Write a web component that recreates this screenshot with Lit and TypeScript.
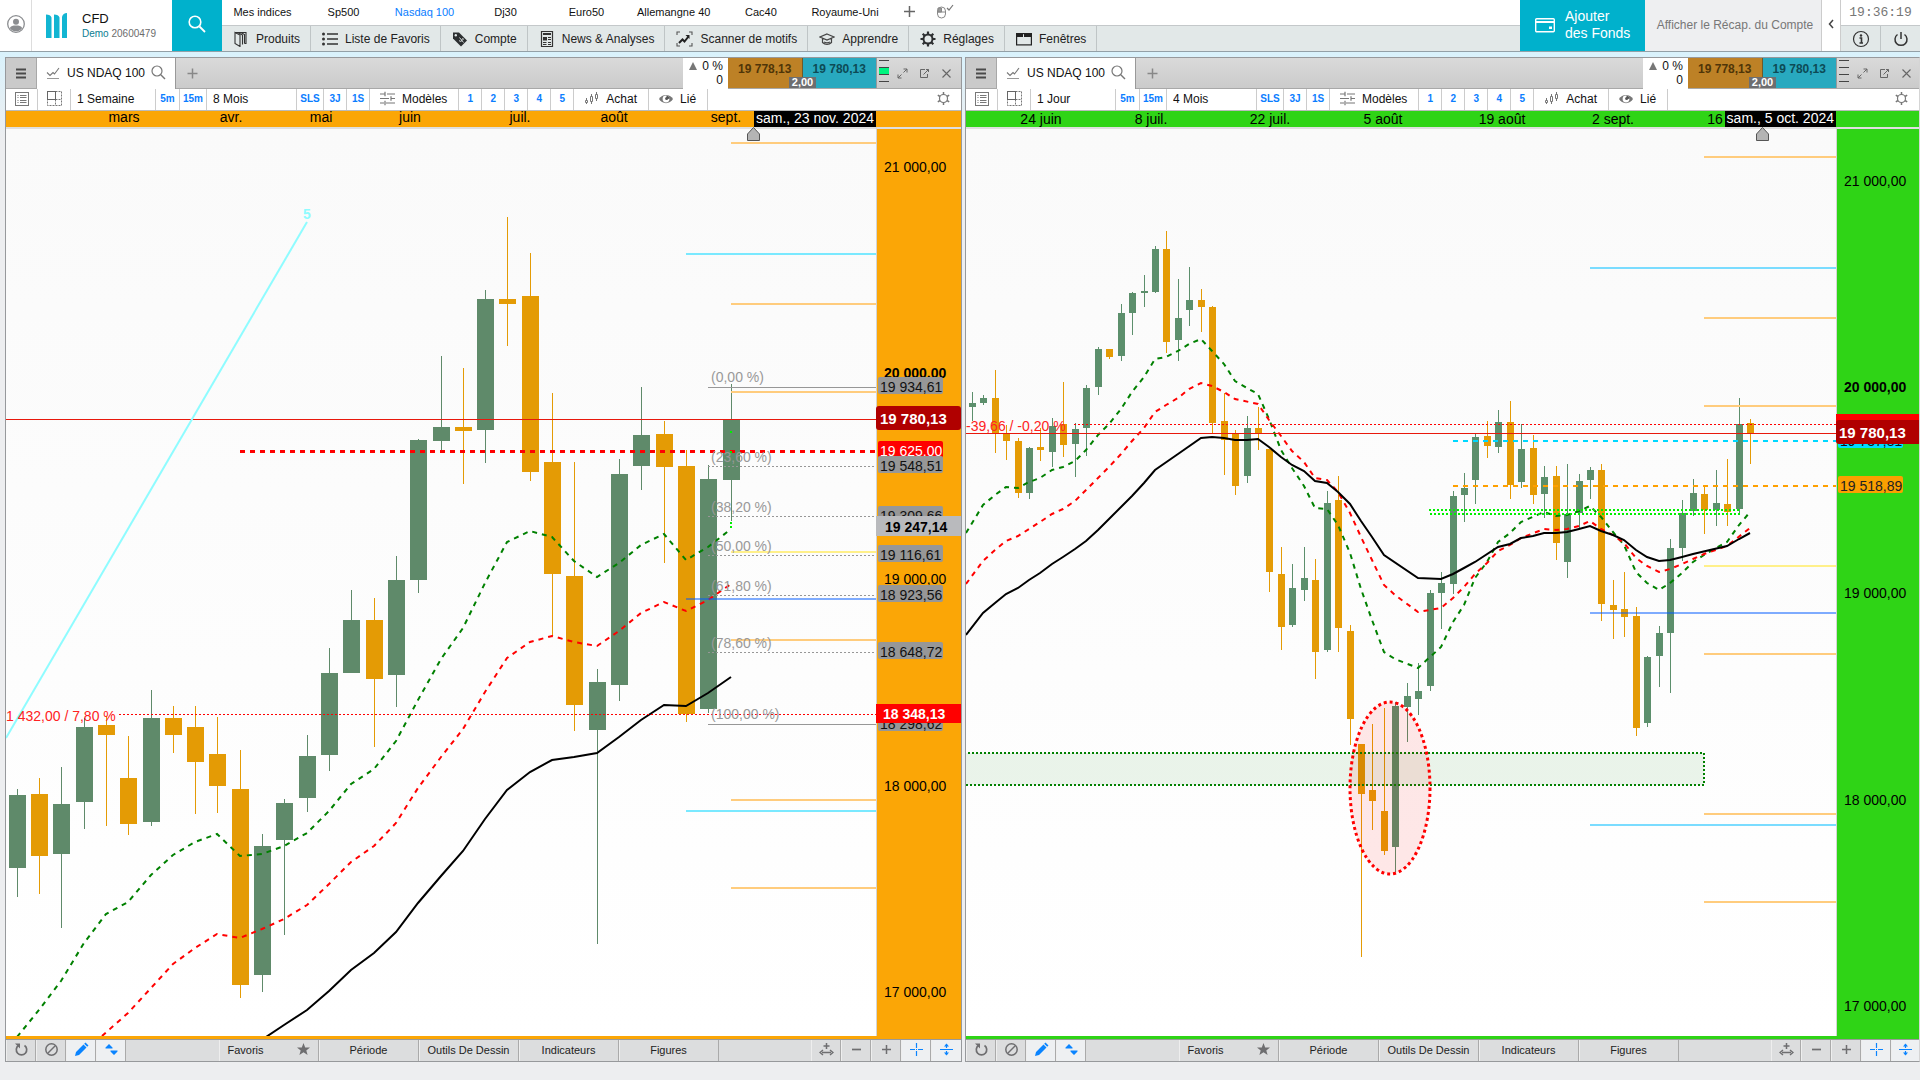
import { LitElement, html, svg, css, TemplateResult } from "lit";
import { customElement, property } from "lit/decorators.js";

/* ---------- icons ---------- */

const icon = (w: number, h: number, body: TemplateResult) =>
  html`<svg class="icon" width=${w} height=${h} viewBox="0 0 ${w} ${h}" aria-hidden="true">${body}</svg>`;

const I = {
  user: icon(18, 18, svg`<circle cx="9" cy="9" r="8.300" fill="#fff" stroke="#8b8d90" stroke-width="1.300"/><circle cx="9" cy="6.800" r="3" fill="#8b8d90"/><path d="M2.800 13c1-2 3-2.500 6.200-2.500s5.200 .5 6.200 2.500a7.400 7.400 0 0 1-12.400 0z" fill="#8b8d90"/>`),
  logo: icon(22, 26, svg`<path d="M0 1.500c3 0 5 1 5.500 3V25H0z M8 1.500c3 0 5 1 5.500 3V25H8z M16 4c.5-2.500 2.500-4 5-4v25h-5z" fill="#12b5d2"/>`),
  searchBig: icon(18, 18, svg`<circle cx="7" cy="7" r="5.800" fill="none" stroke="#fff" stroke-width="1.600"/><path d="M11.500 11.500 17 17" stroke="#fff" stroke-width="1.800"/>`),
  plus: icon(13, 13, svg`<path d="M6.500 1v11M1 6.500h11" stroke="#666" stroke-width="1.500"/>`),
  mouse: icon(18, 16, svg`<rect x="1.500" y="3" width="8" height="11" rx="4" fill="none" stroke="#888"/><path d="M2 4h3.500v4H2zM2 8h7" fill="#999" stroke="#888"/><path d="M11 4l2 2 4-5" fill="none" stroke="#777" stroke-width="1.200"/>`),
  products: icon(16, 16, svg`<path d="M2 1.500h11v11h-1.500M2 1.500l5 2.500v11.500l-5-3zM5 1.500l4.500 2.500v9.500M8 1.500l3.500 2v9" fill="none" stroke="#333" stroke-width="1.100"/>`),
  list: icon(16, 16, svg`<path d="M5 3h11M5 8h11M5 13h11" stroke="#333" stroke-width="1.600"/><circle cx="1.500" cy="3" r="1.500" fill="#333"/><circle cx="1.500" cy="8" r="1.500" fill="#333"/><circle cx="1.500" cy="13" r="1.500" fill="#333"/>`),
  tag: icon(16, 16, svg`<path d="M1 1.500h6l8 8-6 6-8-8z" fill="#2c2f31"/><circle cx="3.800" cy="4.200" r="1.200" fill="#e2e8e8"/><path d="M7 9.500c1.500 1.500 3 1 3-.5s.5-2 2-.5M7.500 6.500l4 5" stroke="#e2e8e8" fill="none" stroke-width=".9"/>`),
  news: icon(16, 16, svg`<path d="M2.500 .5h11v15h-11z" fill="none" stroke="#333" stroke-width="1.200"/><path d="M4 2h8v2H4zM4 6h4v3.500H4z" fill="#333"/><path d="M9 6.500h3M9 8.500h3M4 11.500h3.500M9 11.500h3M4 13.500h3.500M9 13.500h3" stroke="#333"/>`),
  scanner: icon(17, 16, svg`<path d="M1 4V1h3M13 1h3v3M16 12v3h-3M4 15H1v-3" fill="none" stroke="#555" stroke-width="1.100"/><path d="M3 12l3.500-3.500 2 2 4-5" fill="none" stroke="#222" stroke-width="2"/><path d="M9.500 4H13.500V8z" fill="#222"/>`),
  learn: icon(16, 16, svg`<path d="M8 3l7 3-7 3-7-3zM3.500 7.500v4c2.500 2.500 6.500 2.500 9 0v-4M5 11c2 1 4 1 6 0" fill="none" stroke="#444" stroke-width="1.200"/>`),
  gear: icon(16, 16, svg`<circle cx="8" cy="8" r="4.500" fill="none" stroke="#2c2f31" stroke-width="2"/><path d="M8 .5v3M8 12.500v3M.5 8h3M12.500 8h3M2.700 2.700l2 2M11.300 11.300l2 2M2.700 13.300l2-2M11.300 4.700l2-2" stroke="#2c2f31" stroke-width="2.200"/>`),
  window: icon(16, 16, svg`<rect x=".6" y="2.600" width="14.800" height="11.300" fill="none" stroke="#222" stroke-width="1.200"/><path d="M1 3h6v3H1zM8 3h7v3H8z" fill="#222"/>`),
  wallet: icon(20, 16, svg`<rect x=".7" y="1.700" width="18.600" height="13" rx="1" fill="none" stroke="#fff" stroke-width="1.400"/><path d="M1 5h18" stroke="#fff" stroke-width="2"/><rect x="14" y="9.500" width="3" height="2.500" fill="#fff"/>`),
  chevron: icon(6, 10, svg`<path d="M5 1 1.500 5 5 9" fill="none" stroke="#444" stroke-width="1.500"/>`),
  info: icon(18, 18, svg`<circle cx="9" cy="9" r="7.500" fill="none" stroke="#333" stroke-width="1.200"/><circle cx="9" cy="5.500" r="1.200" fill="#333"/><path d="M7.500 8H9.500V12.500M7.500 13h3.500" fill="none" stroke="#333" stroke-width="1.600"/>`),
  power: icon(16, 16, svg`<path d="M4.500 3.500a6 6 0 1 0 7 0M8 1v7" fill="none" stroke="#333" stroke-width="1.500"/>`),
  menu: icon(10, 11, svg`<path d="M0 1.500h10M0 5.500h10M0 9.500h10" stroke="#4a4a4a" stroke-width="2"/>`),
  spark: icon(14, 14, svg`<path d="M1 12.500h12" stroke="#999"/><path d="M1 6.500l3 3 3-3 1.500 1.500L13 2" fill="none" stroke="#777" stroke-width="1.100"/>`),
  search: icon(15, 15, svg`<circle cx="6" cy="6" r="5" fill="none" stroke="#777" stroke-width="1.200"/><path d="M9.800 9.800 14 14" stroke="#777" stroke-width="1.400"/>`),
  add: icon(11, 11, svg`<path d="M5.500 .5v10M.5 5.500h10" stroke="#888" stroke-width="1.500"/>`),
  expand: icon(11, 11, svg`<path d="M6.500 4.500l3.500-3.500M6.500 1H10v3.500M4.500 6.500L1 10M1 6.500V10h3.500" fill="none" stroke="#666"/>`),
  popout: icon(11, 11, svg`<path d="M6 1.500H1.500v8h7V6M4.500 6.500l5-5M7 1.500h2.500V4" fill="none" stroke="#666"/>`),
  close: icon(11, 11, svg`<path d="M1.500 1.500l8 8M9.500 1.500l-8 8" stroke="#666" stroke-width="1.100"/>`),
  details: icon(14, 14, svg`<rect x=".5" y=".5" width="13" height="13" fill="none" stroke="#777"/><path d="M2.500 3.500h1M5 3.500h6.500M2.500 5.500h1M5 5.500h6.500M2.500 8.500h1M5 8.500h6.500M2.500 10.500h1M5 10.500h6.500" stroke="#777"/>`),
  layout: icon(15, 15, svg`<path d="M8.500 .5h6v14h-14v-6M8.500 8.500h6M8.500 8.500v6" fill="none" stroke="#777" stroke-dasharray="2 1"/><rect x=".5" y=".5" width="8" height="8" fill="none" stroke="#666"/>`),
  sliders: icon(15, 15, svg`<path d="M0 3h5M7 3h8M0 7.500h9M11 7.500h4M0 12h4M6 12h9" stroke="#777" stroke-width="1.200"/><path d="M5 .8v4.400M11 5.300v4.400M5 9.800v4.400" stroke="#777" stroke-width="1.200"/>`),
  candles: icon(15, 15, svg`<path d="M2.500 7v6M7.500 3v10M12.500 1v9" stroke="#777"/><path d="M1.500 9.500h2v2h-2zM6.500 5.500h2v5h-2zM11.500 3.500h2v4h-2z" fill="#fff" stroke="#777"/>`),
  eye: icon(14, 14, svg`<path d="M0 7C3 1.500 11 1.500 14 7 11 12.500 3 12.500 0 7z" fill="#777"/><circle cx="7" cy="7" r="3.400" fill="#fff"/><path d="M7.500 6.500V3.600A3.400 3.400 0 0 1 10.400 7z" fill="#555"/><circle cx="7.600" cy="6.400" r="1.500" fill="#555"/>`),
  cog: icon(15, 15, svg`<circle cx="7.500" cy="7.500" r="4" fill="none" stroke="#777" stroke-width="1.200"/><path d="M7.500 1v2.500M7.500 11.500V14M1.800 4.200l2.200 1.300M11 9.500l2.200 1.300M1.800 10.800 4 9.500M11 5.500l2.200-1.300" stroke="#777" stroke-width="1.500"/>`),
  refresh: icon(15, 15, svg`<path d="M4.500 3.500a5.200 5.200 0 1 0 6 0" fill="none" stroke="#6e6e70" stroke-width="1.700"/><path d="M1 1.500h5v5z" fill="#6e6e70"/>`),
  ban: icon(15, 15, svg`<circle cx="7.500" cy="7.500" r="5.700" fill="none" stroke="#6e6e70" stroke-width="1.500"/><path d="M4 11l7-7" stroke="#6e6e70" stroke-width="1.500"/>`),
  pencil: icon(15, 15, svg`<path d="M1 14l1-4 7.500-7.500 3 3L5 13zM10.200 1.800l1.300-1.300 3 3-1.300 1.300z" fill="#0a84ff"/>`),
  updown: icon(13, 13, svg`<path d="M4 1l3.500 3.500v1H.5v-1zM5.500 7.500h7v1L9 12 5.500 8.500z" fill="#0a84ff"/>`),
  star: icon(13, 13, svg`<path d="M6.500 0l1.700 4.500H13L9.300 7.400 10.600 12 6.500 9.300 2.400 12 3.700 7.400 0 4.500h4.800z" fill="#6e6e70"/>`),
  fit: icon(15, 15, svg`<path d="M7.500 1v6M4.500 4h6" stroke="#6e6e70" stroke-width="1.500"/><path d="M3 10.500h9M4 8l-3 2.500L4 13M11 8l3 2.500L11 13" fill="none" stroke="#6e6e70" stroke-width="1.400"/>`),
  minus: icon(11, 11, svg`<path d="M1 5.500h9" stroke="#6e6e70" stroke-width="1.700"/>`),
  plusGrey: icon(11, 11, svg`<path d="M1 5.500h9M5.500 1v9" stroke="#6e6e70" stroke-width="1.500"/>`),
  cross: icon(13, 13, svg`<path d="M0 6.500h5M8 6.500h5M6.500 0v5M6.500 8v5M6 6.500h1" stroke="#0a84ff" stroke-width="1.200"/>`),
  split: icon(13, 13, svg`<path d="M0 6.500h13M6.500 1v4M6.500 8v4" stroke="#0a84ff" stroke-width="1.200"/><path d="M4 3.500L6.500 .5 9 3.500zM4 9.500L6.500 12.500 9 9.500z" fill="#0a84ff"/>`),
};

/* ---------- chart data ---------- */

/** wick x, high, body top, body bottom, low, direction (1 = up) */
type Candle = [number, number, number, number, number, 0 | 1];
type Pt = [number, number];
/** x1, y, colour, stroke width, dash pattern, x2 */
type Level = [number, number, string, number, string?, number?];
interface Tag {
  y: number; h: number; text: string; fill: string; ink: string;
  size?: number; bold?: boolean; wide?: boolean; x: number; round?: number;
}
interface Chart {
  id: string; originX: number; period: string; span: string; scale: string;
  up: string; down: string; half: number;
  candles: Candle[]; green: Pt[]; red: Pt[]; black: Pt[];
  levels: Level[]; dates: [number, string][]; dateBase: number;
  stamp: string; stampX: number; marker: number;
  prices: [number, string, boolean][]; tags: Tag[]; priceLine: number;
}

const AMBER = "#ffcc7d";
const FAR = 4000;
const GREY = "#979797";

const weekly: Chart = {
  id: "w", originX: 6, period: "1 Semaine", span: "8 Mois", scale: "#fba606",
  up: "#5f8a6a", down: "#e49b05", half: 8,
  candles: [
    [17, 789, 795, 868, 897, 1], [39, 778, 794, 856, 894, 0], [61, 767, 804, 854, 928, 1], [84, 718, 727, 802, 829, 1],
    [106, 716, 725, 735, 826, 0], [128, 736, 778, 824, 835, 0], [151, 690, 718, 822, 826, 1], [173, 706, 718, 735, 753, 0],
    [195, 706, 727, 762, 814, 0], [217, 717, 754, 786, 813, 0], [240, 750, 789, 985, 998, 0], [262, 834, 846, 975, 992, 1],
    [284, 799, 803, 840, 935, 1], [307, 735, 756, 798, 812, 1], [329, 648, 673, 755, 771, 1], [351, 590, 620, 673, 673, 1],
    [374, 598, 620, 679, 747, 0], [396, 556, 580, 675, 707, 1], [418, 439, 440, 580, 593, 1], [441, 356, 427, 441, 450, 1],
    [463, 368, 427, 431, 484, 0], [485, 290, 299, 430, 463, 1], [507, 217, 299, 304, 346, 0], [530, 253, 296, 472, 481, 0],
    [552, 393, 462, 574, 636, 0], [574, 462, 576, 705, 731, 0], [597, 669, 682, 730, 944, 1], [619, 459, 474, 685, 701, 1],
    [641, 387, 435, 466, 490, 1], [664, 421, 434, 467, 563, 0], [686, 450, 466, 714, 722, 0], [708, 465, 479, 709, 713, 1],
    [731, 384, 419, 480, 521, 1],
  ],
  green: [[17, 1037], [39, 1010], [61, 981], [84, 943], [106, 914], [128, 902], [151, 875], [173, 855], [195, 842], [217, 834], [240, 856], [262, 854], [284, 846], [307, 833], [329, 811], [351, 784], [374, 769], [396, 741], [418, 700], [441, 659], [463, 628], [485, 583], [507, 542], [530, 531], [552, 537], [574, 561], [597, 577], [619, 563], [641, 545], [664, 534], [686, 560], [708, 547], [731, 529]],
  red: [[102, 1036], [128, 1013], [151, 988], [173, 964], [195, 948], [217, 934], [240, 938], [262, 929], [284, 919], [307, 905], [329, 884], [351, 862], [374, 846], [396, 823], [418, 788], [441, 757], [463, 729], [485, 692], [507, 658], [530, 642], [552, 636], [574, 642], [597, 646], [619, 631], [641, 613], [664, 602], [686, 611], [708, 600], [731, 584]],
  black: [[266, 1037], [284, 1025], [307, 1010], [329, 991], [351, 970], [374, 953], [396, 932], [418, 903], [441, 876], [463, 851], [485, 819], [507, 790], [530, 772], [552, 760], [574, 757], [597, 753], [619, 737], [641, 720], [664, 705], [686, 706], [708, 693], [731, 677]],
  levels: [
    [731, 143, AMBER, 2], [686, 254, "#7ae9ff", 2], [731, 304, AMBER, 2], [731, 392, AMBER, 2], [731, 552, "#fff08a", 2],
    [686, 599, "rgba(0,90,255,.5)", 2], [731, 640, AMBER, 2], [731, 800, AMBER, 2], [686, 811, "#7ae9ff", 2], [731, 888, AMBER, 2],
    [240, 451.5, "#f00", 3, "5 5"], [119, 714.5, "#f00", 1, "2 2"],
    [708, 387.5, GREY, 1], [708, 466.5, GREY, 1, "2 2"], [708, 516.5, GREY, 1, "2 2"], [708, 555.5, GREY, 1, "2 2"],
    [708, 595.5, GREY, 1, "2 2"], [708, 652.5, GREY, 1, "2 2"], [708, 724.5, GREY, 1],
  ],
  dates: [[124, "mars"], [231, "avr."], [321, "mai"], [410, "juin"], [520, "juil."], [614, "août"], [726, "sept."]],
  dateBase: 11, stamp: "sam., 23 nov. 2024", stampX: 754, marker: 753, priceLine: 419,
  prices: [[167, "21 000,00", false], [373, "20 000,00", true], [579, "19 000,00", false], [786, "18 000,00", false], [992, "17 000,00", false]],
  tags: [
    { y: 377, h: 17, text: "19 934,61", fill: GREY, ink: "#111", x: 880 },
    { y: 406, h: 24, text: "19 780,13", fill: "#b00000", ink: "#fff", size: 15, bold: true, wide: true, x: 880, round: 3 },
    { y: 441, h: 17, text: "19 625,00", fill: "#f00", ink: "#fff", x: 880 },
    { y: 456, h: 17, text: "19 548,51", fill: GREY, ink: "#111", x: 880 },
    { y: 506, h: 17, text: "19 309,66", fill: GREY, ink: "#111", x: 880 },
    { y: 516, h: 20, text: "19 247,14", fill: "#b9babd", ink: "#000", bold: true, wide: true, x: 885, round: 0 },
    { y: 545, h: 17, text: "19 116,61", fill: GREY, ink: "#111", x: 880 },
    { y: 585, h: 17, text: "18 923,56", fill: GREY, ink: "#111", x: 880 },
    { y: 642, h: 17, text: "18 648,72", fill: GREY, ink: "#111", x: 880 },
    { y: 714, h: 17, text: "18 298,62", fill: GREY, ink: "#111", x: 880 },
    { y: 704, h: 19, text: "18 348,13", fill: "#f00", ink: "#fff", bold: true, wide: true, x: 883, round: 0 },
  ],
};

const daily: Chart = {
  id: "d", originX: 966, period: "1 Jour", span: "4 Mois", scale: "#2fd416",
  up: "#5c8f6c", down: "#e49b05", half: 3,
  candles: [
    [972, 392, 403, 407, 421, 1], [983, 395, 398, 403, 405, 1], [995, 370, 398, 433, 453, 0], [1006, 425, 433, 441, 460, 0],
    [1018, 438, 441, 493, 498, 0], [1029, 447, 448, 493, 499, 1], [1040, 428, 447, 450, 461, 0], [1052, 418, 426, 452, 467, 1],
    [1063, 382, 424, 445, 457, 0], [1075, 423, 429, 444, 477, 1], [1086, 385, 388, 428, 456, 1], [1098, 347, 349, 387, 395, 1],
    [1109, 349, 349, 357, 359, 0], [1121, 304, 313, 356, 361, 1], [1132, 292, 293, 313, 335, 1], [1144, 275, 291, 293, 307, 1],
    [1155, 246, 249, 292, 293, 1], [1166, 231, 249, 342, 353, 0], [1178, 279, 318, 340, 361, 1], [1189, 267, 300, 310, 326, 1],
    [1201, 289, 300, 307, 332, 0], [1212, 306, 307, 423, 433, 0], [1224, 393, 421, 440, 475, 0], [1235, 430, 433, 486, 495, 0],
    [1247, 416, 428, 476, 483, 1], [1258, 407, 428, 433, 450, 0], [1269, 449, 449, 572, 592, 0], [1281, 547, 574, 627, 650, 0],
    [1292, 564, 588, 625, 627, 1], [1304, 547, 578, 590, 601, 1], [1315, 559, 580, 652, 679, 0], [1327, 491, 503, 650, 652, 1],
    [1338, 476, 500, 628, 652, 0], [1350, 625, 631, 719, 745, 0], [1361, 744, 744, 794, 957, 0], [1372, 724, 790, 801, 830, 0],
    [1384, 708, 811, 851, 855, 0], [1395, 702, 706, 847, 872, 1], [1407, 683, 696, 707, 742, 1], [1418, 663, 691, 699, 715, 1],
    [1430, 590, 593, 686, 691, 1], [1441, 572, 583, 593, 629, 1], [1453, 491, 496, 584, 594, 1], [1464, 473, 488, 495, 522, 1],
    [1475, 433, 437, 480, 504, 1], [1487, 421, 436, 446, 458, 0], [1498, 410, 422, 447, 453, 1], [1510, 401, 422, 485, 499, 0],
    [1521, 424, 449, 482, 488, 1], [1533, 435, 448, 495, 504, 0], [1544, 466, 477, 494, 518, 1], [1556, 466, 476, 543, 560, 0],
    [1567, 464, 514, 562, 578, 1], [1579, 474, 481, 513, 528, 1], [1590, 467, 470, 480, 499, 1], [1601, 464, 470, 604, 621, 0],
    [1613, 580, 605, 610, 639, 0], [1624, 572, 609, 617, 637, 0], [1636, 607, 616, 728, 736, 0], [1647, 656, 657, 723, 727, 1],
    [1659, 626, 633, 656, 687, 1], [1670, 539, 548, 633, 693, 1], [1682, 500, 513, 548, 561, 1], [1693, 479, 493, 511, 516, 1],
    [1704, 486, 494, 510, 534, 0], [1716, 470, 503, 510, 526, 1], [1727, 459, 504, 512, 526, 0], [1739, 398, 424, 509, 513, 1],
    [1750, 419, 423, 433, 464, 0],
  ],
  green: [[966, 533], [983, 505], [995, 495], [1006, 487], [1018, 488], [1029, 482], [1040, 478], [1052, 470], [1063, 467], [1075, 461], [1086, 450], [1098, 435], [1109, 424], [1121, 409], [1132, 392], [1144, 377], [1155, 359], [1166, 357], [1178, 351], [1189, 344], [1201, 339], [1212, 351], [1224, 364], [1235, 381], [1247, 388], [1258, 394], [1269, 419], [1281, 450], [1292, 468], [1304, 486], [1315, 508], [1327, 509], [1338, 525], [1350, 553], [1361, 589], [1372, 620], [1384, 652], [1395, 659], [1418, 668], [1430, 657], [1441, 647], [1453, 622], [1464, 605], [1475, 578], [1487, 562], [1498, 542], [1510, 533], [1521, 522], [1544, 512], [1556, 516], [1567, 515], [1579, 511], [1590, 506], [1601, 517], [1613, 532], [1624, 545], [1636, 572], [1647, 583], [1659, 590], [1670, 583], [1682, 573], [1693, 562], [1704, 555], [1716, 548], [1727, 542], [1739, 525], [1750, 512]],
  red: [[966, 584], [983, 561], [995, 550], [1006, 541], [1018, 536], [1040, 522], [1052, 514], [1063, 509], [1075, 501], [1086, 490], [1098, 478], [1109, 467], [1121, 454], [1132, 441], [1144, 428], [1155, 412], [1166, 405], [1178, 398], [1189, 389], [1201, 383], [1212, 386], [1224, 392], [1235, 399], [1258, 404], [1269, 420], [1281, 436], [1292, 451], [1304, 462], [1315, 478], [1327, 480], [1338, 492], [1350, 513], [1361, 537], [1372, 560], [1384, 585], [1395, 595], [1418, 612], [1441, 608], [1453, 598], [1464, 587], [1475, 574], [1487, 563], [1498, 551], [1510, 545], [1521, 538], [1544, 529], [1556, 530], [1567, 529], [1579, 526], [1590, 521], [1601, 529], [1613, 535], [1624, 543], [1636, 558], [1647, 566], [1659, 572], [1670, 569], [1682, 564], [1693, 559], [1704, 554], [1727, 546], [1750, 528]],
  black: [[966, 635], [983, 613], [995, 603], [1006, 594], [1018, 588], [1029, 580], [1040, 573], [1052, 564], [1063, 557], [1075, 549], [1086, 541], [1098, 530], [1109, 519], [1121, 507], [1132, 496], [1144, 483], [1155, 470], [1178, 454], [1201, 438], [1212, 437], [1224, 438], [1235, 440], [1247, 440], [1258, 439], [1269, 447], [1281, 457], [1292, 465], [1304, 471], [1315, 481], [1327, 483], [1338, 492], [1350, 504], [1361, 521], [1372, 537], [1384, 555], [1418, 578], [1441, 579], [1453, 574], [1464, 568], [1475, 562], [1498, 547], [1510, 544], [1521, 538], [1533, 536], [1544, 533], [1556, 533], [1567, 532], [1579, 529], [1590, 526], [1601, 531], [1613, 535], [1624, 540], [1636, 550], [1647, 557], [1659, 561], [1670, 560], [1682, 557], [1693, 554], [1727, 546], [1739, 539], [1750, 533]],
  levels: [
    [1704, 157, AMBER, 2], [1590, 268, "#7adcff", 2], [1704, 318, AMBER, 2], [1704, 406, AMBER, 2],
    [1074, 424.5, "#f00", 1, "2 2"], [1453, 441, "#00d8ff", 2, "5 5"], [1453, 486, "#ffa000", 2, "5 5"],
    [1704, 566, "#fff08a", 2], [1590, 613, "rgba(0,90,255,.5)", 2], [1704, 654, AMBER, 2],
    [1704, 814, AMBER, 2], [1590, 825, "#7adcff", 2], [1704, 902, AMBER, 2],
    [1429, 510, "#00f000", 2, "2 2", 1740], [1430, 514, "#00f000", 2, "2 2", 1740],
  ],
  dates: [[1041, "24 juin"], [1151, "8 juil."], [1270, "22 juil."], [1383, "5 août"], [1502, "19 août"], [1613, "2 sept."], [1715, "16"]],
  dateBase: 13, stamp: "sam., 5 oct. 2024", stampX: 1725, marker: 1762, priceLine: 433,
  prices: [[181, "21 000,00", false], [387, "20 000,00", true], [593, "19 000,00", false], [800, "18 000,00", false], [1006, "17 000,00", false]],
  tags: [
    { y: 431, h: 17, text: "19 737,81", fill: "#00dcff", ink: "#111", x: 1840 },
    { y: 414, h: 20, text: "19 819,79", fill: "#f00", ink: "#fff", bold: true, wide: true, x: 1844, round: 0 },
    { y: 420, h: 24, text: "19 780,13", fill: "#b00000", ink: "#fff", size: 15, bold: true, wide: true, x: 1839, round: 3 },
    { y: 476, h: 17, text: "19 518,89", fill: "#fba000", ink: "#222", x: 1840 },
  ],
};

/** drawings pinned by the trader on the weekly chart */
const weeklyNotes = svg`
  <path d="M307 222 6 738" stroke="#8ffcff" stroke-width="2"/>
  <text class="b" x="303" y="219" fill="#8ffcff">5</text>
  <path d="M731 431v3M731 451v3M731 522v6" stroke="#00f000" stroke-width="2" stroke-dasharray="2 2"/>
  ${[["0,00", 377], ["23,60", 457], ["38,20", 507], ["50,00", 546], ["61,80", 586], ["78,60", 643], ["100,00", 714]].map(
    ([t, y]) => svg`<text x="711" y=${(y as number) + 5} fill="#999">(${t} %)</text>`)}
  <text x="6" y="721" fill="#f22">1 432,00 / 7,80 %</text>`;

const dailyNotes = svg`
  <rect x="900" y="753" width="804" height="32" fill="rgba(0,128,0,.08)" stroke="#008000" stroke-width="2" stroke-dasharray="2 2"/>
  <ellipse cx="1390" cy="788" rx="40" ry="86" fill="rgba(255,0,0,.09)" stroke="#f00" stroke-width="3" stroke-dasharray="3 3"/>
  <text x="966" y="431" fill="#f22">-39,66 / -0,20 %</text>`;

/* ---------- chart panel ---------- */

@customElement("chart-panel")
class ChartPanel extends LitElement {
  @property({ attribute: false }) chart!: Chart;
  @property({ type: Boolean }) depth = false;

  static styles = css`
    :host { display: flex; flex-direction: column; min-width: 0; border: 1px solid #97999c; --axis: 85px; font: 12px/14px "Liberation Sans", Arial, sans-serif; color: #111; background: #fff; }
    :host(.narrow) { --axis: 83px; border-right-color: #d5d5d5; }
    * { box-sizing: border-box; }
    button, select { font: inherit; color: inherit; border: 0; margin: 0; padding: 0; background: none; border-radius: 0; }
    .icon { display: block; flex: none; }
    .head { display: flex; height: 31px; background: linear-gradient(#dadada, #cbcbcb); border-bottom: 1px solid #a8a8a8; }
    .menu { width: 31px; flex: none; display: grid; place-items: center; border-right: 1px solid #a8a8a8; background: #cacaca; height: 30px; }
    .tab { display: flex; align-items: center; gap: 6px; height: 31px; padding: 0 9px 2px; background: #fff; border-right: 1px solid #999; flex: none; }
    .tab button { display: flex; align-items: center; gap: 7px; white-space: nowrap; }
    .new { width: 32px; display: grid; place-items: center; height: 30px; }
    .fill { flex: 1; }
    .change { width: 45px; flex: none; background: #fff; height: 31px; padding: 1px 5px 0 0; text-align: right; white-space: nowrap; }
    .tri { display: inline-block; border: 4px solid transparent; border-bottom: 8px solid #777; border-top: 0; margin-right: 5px; }
    .quotes { position: relative; display: flex; width: 148px; flex: none; height: 30px; font-weight: 700; }
    .sell, .buy { height: 30px; flex: 1; padding-bottom: 8px; text-align: center; }
    .sell { background: #bd8126; color: #4f3508; border-right: 1px solid #6d5a2a; }
    .buy { background: #28a9bf; color: #0d4b56; }
    .spread { position: absolute; left: 61px; bottom: 0; width: 27px; height: 11px; line-height: 11px; font-size: 11px; text-align: center; color: #fff; background: #6d6e70; }
    .tools { width: var(--axis); flex: none; display: flex; align-items: center; height: 30px; border-left: 1px solid #999; }
    .depth { width: 14px; height: 30px; padding: 2px; display: flex; flex-direction: column; gap: 6px; flex: none; }
    .depth i { height: 1px; background: #444; position: relative; }
    .depth i.on::after { content: ""; position: absolute; left: 0; right: 0; bottom: 1px; height: 6px; background: #00f47f; }
    .tools button { width: 22px; height: 30px; display: grid; place-items: center; }
    .bar { display: flex; height: 22px; border-bottom: 1px solid #bbb; background: #fff; }
    .bar > button { border-right: 1px solid #ccc; flex: none; display: flex; align-items: center; justify-content: center; white-space: nowrap; padding-bottom: 2px; }
    .bar .w31 { width: 32px; } .bar .w33 { width: 33px; }
    .bar select { appearance: none; flex: none; height: 21px; padding: 0 6px 2px; outline: 0; border-right: 1px solid #ccc; }
    .bar .per { width: 85px; } .bar .span { width: 90px; }
    .bar .q { font-size: 10px; font-weight: 700; color: #0a7dff; }
    .bar .w23 { width: 23px; } .bar .w24 { width: 24px; } .bar .w27 { width: 27px; }
    .bar .t { padding: 0 11px 2px 10px; gap: 7px; }
    .bar .cog { border: 0; margin-right: 10px; width: 16px; }
    .dates { display: block; width: 100%; height: 16px; flex: none; font-size: 14px; }
    .plot { flex: 1; display: flex; min-height: 400px; }
    .canvas { flex: 1; min-width: 0; display: block; background: linear-gradient(#fafafa, #fff); font-size: 14px; }
    .axis { width: var(--axis); flex: none; display: block; font-size: 14px; }
    .b { font-weight: 700; }
    .base { display: block; flex: none; border-bottom: 1px solid #999; }
    .foot { height: 21px; flex: none; display: flex; background: #dcddde; font-size: 11px; color: #222; }
    .foot button { border-right: 1px solid #aaa; border-left: 1px solid #eee; display: flex; align-items: center; justify-content: center; height: 21px; padding-bottom: 2px; white-space: nowrap; }
    .foot .s { width: 30px; flex: none; }
    .foot .lit { background: #eef0f2; }
    .group { display: flex; }
    .group button { width: 100px; }
    .group .fav { justify-content: space-between; padding: 0 8px 2px; }
    .ends { display: flex; width: calc(var(--axis) + 65px); flex: none; }
    .ends button { width: 30px; }
    .ends button:last-child { flex: 1; border-right: 0; }
  `;

  private line(p: Pt[], color: string, dash = "none") {
    return svg`<polyline points=${p.map(([x, y]) => `${x},${y}`).join(" ")} fill="none" stroke=${color} stroke-width="2" stroke-dasharray=${dash}/>`;
  }

  private plot(c: Chart) {
    return html`<svg class="canvas" role="img" aria-label="US NDAQ 100">
      <g transform="translate(${-c.originX} -127)">
        <rect x="0" y="127" width=${FAR} height="2" fill="#dfdfdf"/>
        ${c.candles.map(([x, hi, t, b, lo, up]) => svg`<path fill=${up ? c.up : c.down}
          d="M${x} ${hi}h1V${lo}h-1zM${x - c.half} ${t}h${c.half * 2 + 1}V${b}h-${c.half * 2 + 1}z"/>`)}
        ${this.line(c.green, "#008000", "5 5")}
        ${this.line(c.red, "#f00", "5 5")}
        ${this.line(c.black, "#000")}
        <path d="M0 ${c.priceLine + 0.5}H${FAR}" stroke="#e8180c"/>
        ${c.levels.map(([x, y, color, w, dash, x2]) => svg`<path d="M${x} ${y}H${x2 ?? FAR}" stroke=${color} stroke-width=${w} stroke-dasharray=${dash ?? "none"}/>`)}
        ${c.id === "w" ? weeklyNotes : dailyNotes}
        <path d="M${c.marker + 0.5} 127.500l6 6.500v6.500h-12v-6.500z" fill="#b4b4b4" stroke="#555"/>
      </g></svg>`;
  }

  private axis(c: Chart) {
    const left = c.originX + 870;
    return html`<svg class="axis">
      <g transform="translate(${-left} -127)">
        <rect x=${left} y="127" width="200" height=${FAR} fill=${c.scale}/>
        <rect x=${left} y="127" width="200" height="2" fill="#dfdfdf"/>
        <rect x=${left} y="127" width="1" height=${FAR} fill="#d4d4d4"/>
        ${c.prices.map(([y, t, bold]) => svg`<text class=${bold ? "b" : ""} x=${left + 8} y=${y + 5}>${t}</text>`)}
        ${c.tags.map((t) => svg`<rect x=${t.wide ? left : left + 2} y=${t.y} width=${t.wide ? 85 : 65} height=${t.h} rx=${t.round ?? 2} fill=${t.fill}/>
          <text class=${t.bold ? "b" : ""} x=${t.x} y=${t.y + Math.floor(t.h / 2) + 6 + (t.h === 17 ? 1 : 0)} fill=${t.ink} font-size=${t.size ?? 14}>${t.text}</text>`)}
      </g></svg>`;
  }

  render() {
    const c = this.chart;
    return html`
      <div class="head">
        <button class="menu" aria-label="Menu">${I.menu}</button>
        <div class="tab"><button>${I.spark}US NDAQ 100</button><button aria-label="Rechercher">${I.search}</button></div>
        <button class="new" aria-label="Nouvel onglet">${I.add}</button>
        <div class="fill"></div>
        <div class="change"><div><span class="tri"></span>0 %</div><div>0</div></div>
        <div class="quotes">
          <button class="sell">19 778,13</button><button class="buy">19 780,13</button>
          <span class="spread">2,00</span>
        </div>
        <div class="tools">
          <div class="depth"><i></i><i></i><i class=${this.depth ? "on" : ""}></i><i></i></div>
          <button aria-label="Agrandir">${I.expand}</button>
          <button aria-label="Détacher">${I.popout}</button>
          <button aria-label="Fermer">${I.close}</button>
        </div>
      </div>
      <div class="bar">
        <button class="w31" aria-label="Détails">${I.details}</button>
        <button class="w33" aria-label="Disposition">${I.layout}</button>
        <select class="per" aria-label="Unité de temps"><option>${c.period}</option></select>
        <button class="q w24">5m</button><button class="q w27">15m</button>
        <select class="span" aria-label="Durée affichée"><option>${c.span}</option></select>
        <button class="q w27">SLS</button><button class="q w23">3J</button><button class="q w23">1S</button>
        <button class="t">${I.sliders}Modèles</button>
        ${[1, 2, 3, 4, 5].map((n) => html`<button class="q w23">${n}</button>`)}
        <button class="t">${I.candles}Achat</button>
        <button class="t">${I.eye}Lié</button>
        <div class="fill"></div>
        <button class="cog" aria-label="Paramètres">${I.cog}</button>
      </div>
      <svg class="dates">
        <rect width="100%" height="16" fill=${c.scale}/>
        <g transform="translate(${-c.originX} 0)">
          ${c.dates.map(([x, t]) => svg`<text x=${x} y=${c.dateBase} text-anchor="middle">${t}</text>`)}
          <rect x=${c.stampX} y="0" width=${c.originX + 870 - c.stampX} height="16"/>
          <text x=${c.originX + 868} y="12" text-anchor="end" fill="#fff">${c.stamp}</text>
        </g>
      </svg>
      <div class="plot">${this.plot(c)}${this.axis(c)}</div>
      <svg class="base" width="100%" height="4"><rect width="100%" height="4" fill=${c.scale}/></svg>
      <div class="foot">
        <button class="s" aria-label="Actualiser">${I.refresh}</button>
        <button class="s" aria-label="Masquer">${I.ban}</button>
        <button class="s lit" aria-label="Dessiner">${I.pencil}</button>
        <button class="s lit" aria-label="Déplacer">${I.updown}</button>
        <div class="fill"></div>
        <div class="group">
          <button class="fav">Favoris ${I.star}</button><button>Période</button><button>Outils De Dessin</button>
          <button>Indicateurs</button><button>Figures</button>
        </div>
        <div class="fill"></div>
        <div class="ends">
          <button aria-label="Ajuster">${I.fit}</button><button aria-label="Zoom arrière">${I.minus}</button>
          <button aria-label="Zoom avant">${I.plusGrey}</button><button class="lit" aria-label="Réticule">${I.cross}</button>
          <button class="lit" aria-label="Échelle">${I.split}</button>
        </div>
      </div>`;
  }
}

/* ---------- application shell ---------- */

const LISTS = ["Mes indices", "Sp500", "Nasdaq 100", "Dj30", "Euro50", "Allemangne 40", "Cac40", "Royaume-Uni"];

@customElement("app-root")
class AppRoot extends LitElement {
  static styles = css`
    :host { display: flex; flex-direction: column; min-height: 100vh; font: 12px/14px "Liberation Sans", Arial, sans-serif; color: #111; background: linear-gradient(#d9f2fc 52px, #edeef0 140px); }
    * { box-sizing: border-box; }
    button, a { font: inherit; color: inherit; border: 0; margin: 0; padding: 0; background: none; text-decoration: none; white-space: nowrap; }
    .icon { display: block; flex: none; }
    header { display: flex; height: 52px; flex: none; background: #fff; border-bottom: 1px solid #93a0a7; }
    .user { width: 32px; display: grid; place-items: center; padding-bottom: 3px; border-right: 1px solid #ddd; }
    .account { width: 140px; display: flex; align-items: center; gap: 14px; padding-left: 14px; text-align: left; }
    .name { font-size: 13px; line-height: 16px; }
    .demo { font-size: 10px; line-height: 14px; color: #6c6c6c; }
    .demo b { font-weight: 400; color: #0b7d91; }
    .search { width: 50px; background: #00b1cc; display: grid; place-items: center; padding-bottom: 4px; }
    .mid { flex: 1; min-width: 0; }
    .lists { display: flex; height: 26px; border-bottom: 1px solid #c4c8ca; align-items: center; font-size: 11px; padding-bottom: 2px; }
    .lists a { min-width: 81px; padding: 0 10px; text-align: center; white-space: nowrap; }
    .lists a.on { color: #0a7dff; }
    .lists button { width: 28px; height: 23px; display: grid; place-items: center; margin-left: 7px; }
    nav { display: flex; height: 25px; background: #e2e8e8; }
    nav a { display: flex; align-items: center; gap: 7px; padding: 0 10px 0 11px; border-right: 1px solid #bfc5c6; color: #222; }
    .funds { width: 125px; display: flex; align-items: center; gap: 10px; padding: 0 15px 2px; background: #00b1cc; color: #fff; font-size: 14px; line-height: 17px; text-align: left; }
    .recap { width: 176px; padding: 0 0 2px 4px; background: #eeeff1; color: #777; }
    .chev { width: 20px; border: 1px solid #ccc; border-width: 0 1px; display: grid; place-items: center; padding-bottom: 4px; }
    .side { width: 79px; }
    time { display: block; height: 26px; border-bottom: 1px solid #c4c8ca; text-align: center; font: 13px/26px "Liberation Mono", monospace; color: #777; }
    .side div { display: flex; height: 25px; background: #e2e8e8; }
    .side button { flex: 1; display: grid; place-items: center; }
    .side button + button { border-left: 1px solid #bfc5c6; }
    main { flex: 1; display: grid; grid-template-columns: 957fr 955fr; gap: 3px; padding: 5px 0 18px 5px; }
  `;

  render() {
    return html`
      <header>
        <button class="user" aria-label="Profil">${I.user}</button>
        <button class="account">${I.logo}<div><div class="name">CFD</div><div class="demo"><b>Demo</b> 20600479</div></div></button>
        <button class="search" aria-label="Rechercher">${I.searchBig}</button>
        <div class="mid">
          <div class="lists">
            ${LISTS.map((t) => html`<a href="#" class=${t === "Nasdaq 100" ? "on" : ""}>${t}</a>`)}
            <button aria-label="Ajouter">${I.plus}</button>
            <button aria-label="Souris">${I.mouse}</button>
          </div>
          <nav>
            <a href="#">${I.products}Produits</a><a href="#">${I.list}Liste de Favoris</a><a href="#">${I.tag}Compte</a>
            <a href="#">${I.news}News &amp; Analyses</a><a href="#">${I.scanner}Scanner de motifs</a><a href="#">${I.learn}Apprendre</a>
            <a href="#">${I.gear}Réglages</a><a href="#">${I.window}Fenêtres</a>
          </nav>
        </div>
        <button class="funds">${I.wallet}<span>Ajouter<br>des Fonds</span></button>
        <button class="recap">Afficher le Récap. du Compte</button>
        <button class="chev" aria-label="Replier">${I.chevron}</button>
        <div class="side">
          <time>19:36:19</time>
          <div><button aria-label="Infos">${I.info}</button><button aria-label="Déconnexion">${I.power}</button></div>
        </div>
      </header>
      <main>
        <chart-panel .chart=${weekly} depth></chart-panel>
        <chart-panel class="narrow" .chart=${daily}></chart-panel>
      </main>`;
  }
}
